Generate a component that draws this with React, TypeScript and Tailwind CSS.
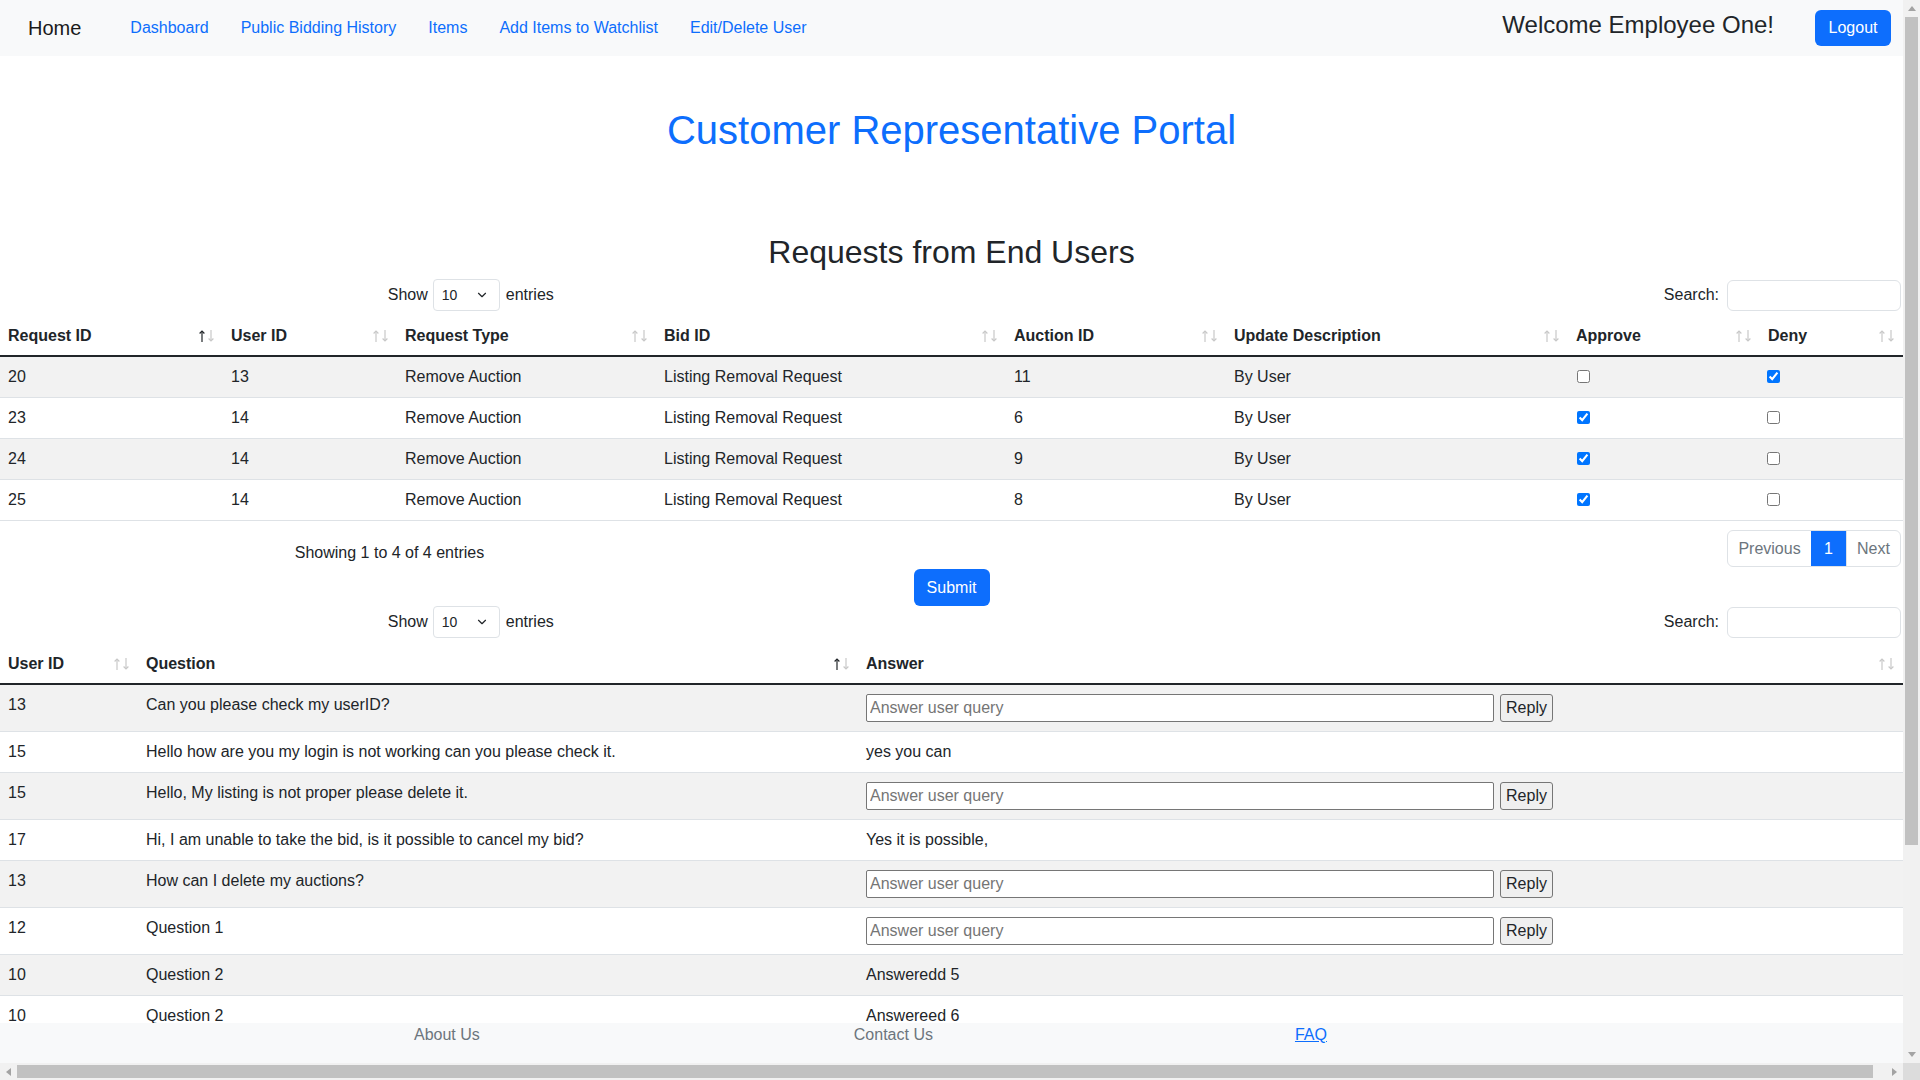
import { ChevronDown } from "lucide-react";

const requests = [
  { id: 20, user: 13, auction: 11, approve: false, deny: true },
  { id: 23, user: 14, auction: 6, approve: true, deny: false },
  { id: 24, user: 14, auction: 9, approve: true, deny: false },
  { id: 25, user: 14, auction: 8, approve: true, deny: false },
];

const questions = [
  { user: 13, q: "Can you please check my userID?", a: "" },
  { user: 15, q: "Hello how are you my login is not working can you please check it.", a: "yes you can" },
  { user: 15, q: "Hello, My listing is not proper please delete it.", a: "" },
  { user: 17, q: "Hi, I am unable to take the bid, is it possible to cancel my bid?", a: "Yes it is possible," },
  { user: 13, q: "How can I delete my auctions?", a: "" },
  { user: 12, q: "Question 1", a: "" },
  { user: 10, q: "Question 2", a: "Answeredd 5" },
  { user: 10, q: "Question 2", a: "Answereed 6" },
];

// datatables style sort arrows
const SortIcon = ({ active }: { active?: boolean }) => (
  <svg width="15" height="14" viewBox="0 0 15 14" className="mr-[9px]" fill="none" strokeWidth="1.2">
    <g stroke={active ? "#212529" : "#c8c8c8"}>
      <path d="M3 2V13" />
      <path d="M0.6 4.5L3 2L5.4 4.5" />
    </g>
    <g stroke="#c8c8c8">
      <path d="M12 1V12" />
      <path d="M9.6 9.5L12 12L14.4 9.5" />
    </g>
  </svg>
);

const Th = ({ label, active }: { label: string; active?: boolean }) => (
  <div className="flex items-center justify-between pb-[7px] pl-2 pt-[9px] font-bold">
    <span>{label}</span>
    <SortIcon active={active} />
  </div>
);

const Controls = () => (
  <div className="grid h-[32px] grid-cols-2">
    <div className="flex items-center justify-center gap-[5px] pr-[10px]">
      <span>Show</span>
      <div className="flex h-[32px] w-[67px] items-center justify-between rounded-[4px] border border-[#dee2e6] pl-[8px] pr-[10px] text-[14px]">
        <span>10</span>
        <ChevronDown size={14} strokeWidth={2} />
      </div>
      <span className="ml-[1px]">entries</span>
    </div>
    <div className="flex items-center justify-end gap-[8px] pr-[2px]">
      <span>Search:</span>
      <div className="h-[31px] w-[174px] rounded-[6px] border border-[#dee2e6] bg-white" />
    </div>
  </div>
);

const Arrow = ({ dir }: { dir: "up" | "down" | "left" | "right" }) => {
  const pts = {
    up: "4,1 8,6 0,6",
    down: "0,1 8,1 4,6",
    left: "6,0 6,8 1,4",
    right: "1,0 1,8 6,4",
  }[dir];
  return (
    <svg width="8" height="8" viewBox="0 0 8 8">
      <polygon points={pts} fill="#a3a3a3" />
    </svg>
  );
};

export default function App() {
  return (
    <div className="flex h-screen w-full overflow-hidden bg-white font-['Liberation_Sans',Arial,sans-serif] text-[16px] leading-6 text-[#212529]">
      <div className="flex w-[1903px] flex-col">
        <nav className="flex h-14 shrink-0 items-center bg-[#f8f9fa] pl-[28px] pr-[12px]">
          <span className="text-[20px] text-[#1a1a1a]">Home</span>
          <div className="ml-[49px] flex gap-[32px] text-[#0d6efd]">
            <span>Dashboard</span>
            <span>Public Bidding History</span>
            <span>Items</span>
            <span>Add Items to Watchlist</span>
            <span>Edit/Delete User</span>
          </div>
          <span className="ml-auto -mt-[7px] text-[24px] font-medium">Welcome Employee One!</span>
          <button className="ml-[41px] h-[36px] w-[76px] rounded-[6px] bg-[#0d6efd] text-white">Logout</button>
        </nav>

        <main className="flex-1 overflow-hidden">
          <h1 className="mt-[50px] text-center text-[40px] font-medium leading-[48px] text-[#0d6efd]">
            Customer Representative Portal
          </h1>
          <h2 className="mt-[79px] text-center text-[32px] font-medium leading-[38px]">Requests from End Users</h2>

          <div className="mt-[8px]">
            <Controls />
          </div>

          <div className="mt-[4px]">
            <div className="grid grid-cols-[223px_174px_259px_350px_220px_342px_192px_143px] border-b-2 border-[#212529]">
              <Th label="Request ID" active />
              <Th label="User ID" />
              <Th label="Request Type" />
              <Th label="Bid ID" />
              <Th label="Auction ID" />
              <Th label="Update Description" />
              <Th label="Approve" />
              <Th label="Deny" />
            </div>
            {requests.map((r, i) => (
              <div
                key={r.id}
                className={`grid grid-cols-[223px_174px_259px_350px_220px_342px_192px_143px] border-b border-[#dee2e6] ${
                  i % 2 === 0 ? "bg-[#f2f2f2]" : "bg-white"
                }`}
              >
                <div className="py-2 pl-2">{r.id}</div>
                <div className="py-2 pl-2">{r.user}</div>
                <div className="py-2 pl-2">Remove Auction</div>
                <div className="py-2 pl-2">Listing Removal Request</div>
                <div className="py-2 pl-2">{r.auction}</div>
                <div className="py-2 pl-2">By User</div>
                <div className="flex items-center py-2 pl-[9px]">
                  <input type="checkbox" defaultChecked={r.approve} className="m-0 -mt-[2px] h-[13px] w-[13px]" />
                </div>
                <div className="flex items-center py-2 pl-[7px]">
                  <input type="checkbox" defaultChecked={r.deny} className="m-0 -mt-[2px] h-[13px] w-[13px]" />
                </div>
              </div>
            ))}
          </div>

          <div className="mt-[9px] grid h-[37px] grid-cols-[779px_1fr]">
            <div className="pt-[11px] text-center">Showing 1 to 4 of 4 entries</div>
            <div className="flex justify-end pr-[2px]">
              <div className="flex h-[37px] overflow-hidden rounded-[6px] border border-[#dee2e6]">
                <span className="flex w-[83px] items-center justify-center text-[#6c757d]">Previous</span>
                <span className="flex w-[35px] items-center justify-center bg-[#0d6efd] text-white">1</span>
                <span className="flex w-[54px] items-center justify-center border-l border-[#dee2e6] text-[#6c757d]">Next</span>
              </div>
            </div>
          </div>

          <div className="mt-[2px] flex justify-center">
            <button className="h-[37px] w-[76px] rounded-[6px] bg-[#0d6efd] text-white">Submit</button>
          </div>

          <Controls />

          <div className="mt-[5px]">
            <div className="grid grid-cols-[138px_720px_1045px] border-b-2 border-[#212529]">
              <Th label="User ID" />
              <Th label="Question" active />
              <Th label="Answer" />
            </div>
            {questions.map((q, i) => (
              <div
                key={i}
                className={`grid grid-cols-[138px_720px_1045px] border-b border-[#dee2e6] ${
                  i % 2 === 0 ? "bg-[#f2f2f2]" : "bg-white"
                }`}
              >
                <div className="py-2 pl-2">{q.user}</div>
                <div className="py-2 pl-2">{q.q}</div>
                <div className="py-2 pl-2">
                  {q.a ? (
                    q.a
                  ) : (
                    <div className="flex h-[30px] items-center gap-[6px]">
                      <input
                        placeholder="Answer user query"
                        className="h-[28px] w-[628px] rounded-[2px] border border-[#767676] bg-white px-[3px] placeholder:text-[#757575]"
                      />
                      <button className="h-[28px] w-[53px] rounded-[3px] border border-[#767676] bg-[#efefef]">Reply</button>
                    </div>
                  )}
                </div>
              </div>
            ))}
          </div>
        </main>

        <footer className="flex h-10 shrink-0 bg-[#f8f9fa] pl-[414px]">
          <span className="text-[#6c757d]">About Us</span>
          <span className="ml-[374px] text-[#6c757d]">Contact Us</span>
          <span className="ml-[362px] text-[#0d6efd] underline">FAQ</span>
        </footer>

        <div className="flex h-[17px] shrink-0 items-center bg-[#f1f1f1]">
          <div className="flex w-[17px] justify-center">
            <Arrow dir="left" />
          </div>
          <div className="h-[13px] w-[1856px] bg-[#c1c1c1]" />
          <div className="ml-auto flex w-[17px] justify-center">
            <Arrow dir="right" />
          </div>
        </div>
      </div>

      <div className="flex w-[17px] flex-col bg-[#f1f1f1]">
        <div className="flex h-[17px] items-center justify-center">
          <Arrow dir="up" />
        </div>
        <div className="mx-[2px] h-[828px] bg-[#c1c1c1]" />
        <div className="mt-auto flex h-[17px] items-center justify-center">
          <Arrow dir="down" />
        </div>
        <div className="h-[17px] bg-[#dcdcdc]" />
      </div>
    </div>
  );
}
